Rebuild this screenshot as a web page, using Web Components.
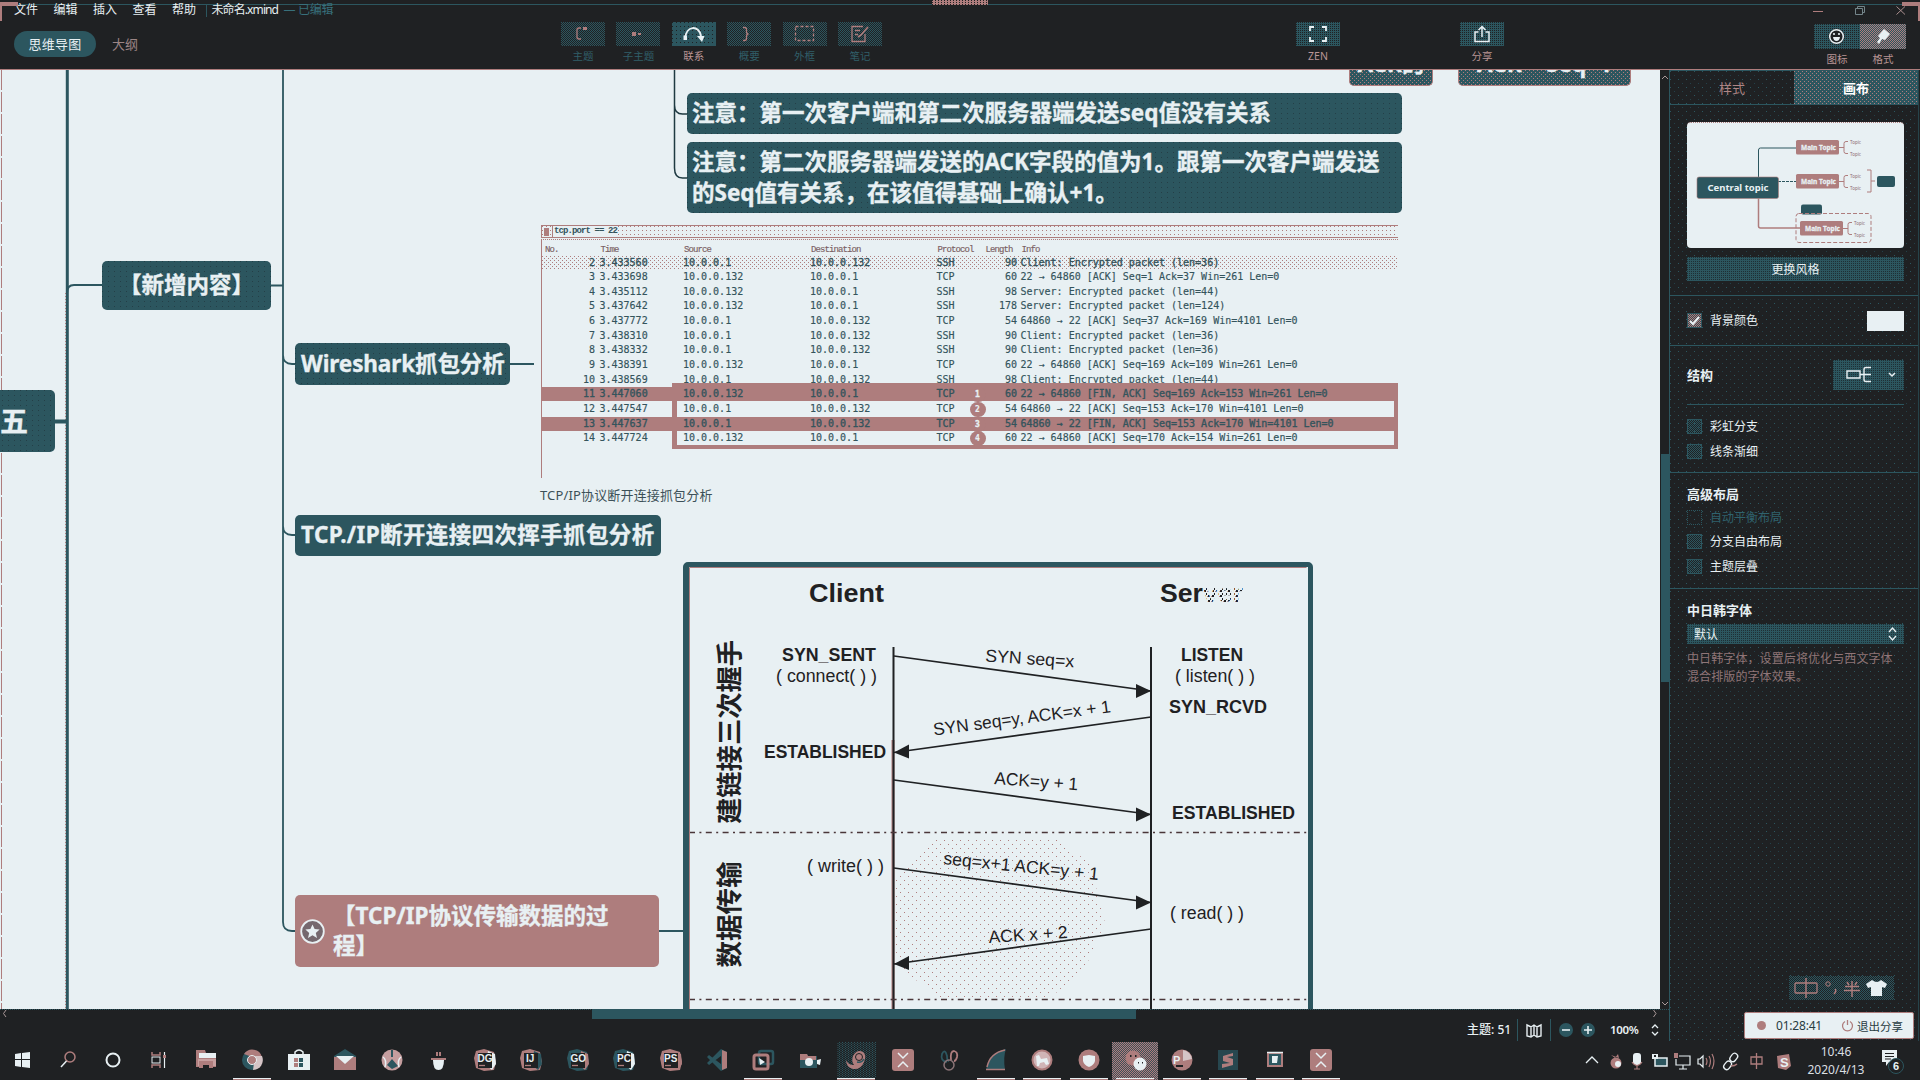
<!DOCTYPE html>
<html lang="zh-CN">
<head>
<meta charset="utf-8">
<title>未命名.xmind</title>
<style>
html,body{margin:0;height:100%;overflow:hidden;background:#1f2123}
body{--k:#1f2123;--t:#2c565f;--r:#ae7d7d;--w:#e8f0f3;font-family:"Noto Sans","Noto Sans CJK SC",sans-serif;color:var(--w)}
</style>
</head>
<body>
<mind-app></mind-app>
<script>
// Pixel screen: one dot of a colour in every w×h tile.
const dot=(c,w,h=w)=>`conic-gradient(at 1px 1px,transparent 75%,${c} 0) 0 0/${w}px ${h}px`;
const mesh=(c,w,h=w)=>`conic-gradient(at 1px 1px,transparent 75%,${c} 0) 0 0/${w}px ${h}px,conic-gradient(at 1px 1px,transparent 75%,${c} 0) ${w/2}px ${h/2}px/${w}px ${h}px`;
const define=(name,css,html)=>customElements.define(name,class extends HTMLElement{
  connectedCallback(){
    if(this.shadowRoot)return;
    const root=this.attachShadow({mode:'open'});
    root.innerHTML=`<style>*{box-sizing:border-box}:host{display:block;box-sizing:border-box}${css}</style>`+(typeof html==='function'?html(this):html);
  }
});
const svg=(w,h,body,vb)=>`<svg width="${w}" height="${h}" viewBox="${vb||`0 0 ${w} ${h}`}" fill="none">${body}</svg>`;

/* ---------- header ---------- */
define('tool-button',`
:host{display:flex;flex-direction:column;align-items:center;width:44px;flex:none}
.b{width:44px;height:24px;display:flex;align-items:center;justify-content:center;background:${dot('var(--k)',2)},var(--t)}
:host([dim]) .b{background:${mesh('var(--t)',2)},var(--k)}
:host([on]) .b{background:${dot('var(--k)',4)},#2c565f}
:host([side]){width:46px}:host([side]) .b{width:46px;height:25px}
:host([lit]) .b{background:${mesh('var(--r)',2)},var(--t)}
span{font-size:10.5px;line-height:16px;margin-top:2px;color:#b99595;white-space:nowrap}
:host([dim]) span{color:#315f69}
svg{display:block}`,
el=>`<div class="b">${el.innerHTML}</div><span>${el.getAttribute('label')}</span>`);

define('app-header',`
:host{height:70px;flex:none;background:linear-gradient(var(--t),var(--t)) 18px 4px/1884px 1px no-repeat,var(--k);border-bottom:1px solid var(--r);position:relative}
.menu{height:22px;padding:0 14px 2px;display:flex;align-items:center;font-size:12px;line-height:16px;white-space:nowrap}
.menu b{font-weight:400;width:39.5px}.menu i{width:1px;height:13px;background:var(--t);margin:0 5px 0 -6px}
.menu .ttl{letter-spacing:-.9px;width:67px}
.menu em{font-style:normal;color:#38707b;margin-left:5px;letter-spacing:-.3px}
.win{margin-left:auto;width:93px;display:flex;justify-content:space-between;align-items:center}
.row{display:flex;align-items:flex-start}
.pill{margin:9px 0 0 14px;width:82px;height:26px;border-radius:13px;background:var(--t);font-size:13px;line-height:26px;text-align:center;letter-spacing:.2px}
.out{margin:9px 0 0 16px;width:26px;font-size:13px;line-height:26px;color:#9c8585;white-space:nowrap}
.tools{margin-left:423px;display:flex;gap:11.4px}
.zen{margin-left:414px}.share{margin-left:120px}.side{margin:2px 0 0 310px;display:flex}
.tab{position:absolute;left:932px;top:0;width:56px;height:5px;background:${dot('var(--k)',3,2)},var(--r)}
.cn{position:absolute;top:2px;width:18px;height:19px;border-top:4px solid var(--r)}
.l{left:0;border-left:2px solid var(--r)}.rr{right:0;border-right:2px solid var(--r)}`,
`<div class="menu"><b>文件</b><b>编辑</b><b>插入</b><b>查看</b><b>帮助</b><i></i><span class="ttl">未命名.xmind</span><em>— 已编辑</em>
<div class="win">${svg(10,9,'<path d="M0 5.5h10" stroke="#ae7d7d"/>')}${svg(12,11,'<path d="M1.5 3.5h7v6h-7zM3.5 3V1.500h7v6H9" stroke="#74858a"/>')}${svg(10,9,'<path d="M.5.5l8.500 8.000M9 .5L.5 8.500" stroke="#a98e8e"/>')}</div></div>
<div class="row"><div class="pill">思维导图</div><div class="out">大纲</div>
<div class="tools">
<tool-button dim label="主题">${svg(20,18,'<path d="M8 3H6Q4 3 4 5v7q0 2 2 2h2" stroke="#ae7d7d" stroke-width="1.3"/><path d="M10 2h4v3h-4z" fill="#ae7d7d"/>')}</tool-button>
<tool-button dim label="子主题">${svg(20,18,'<rect x="4" y="7" width="4" height="4" fill="#ae7d7d"/><path d="M10 9h3" stroke="#ae7d7d" stroke-width="2"/>')}</tool-button>
<tool-button on label="联系">${svg(22,20,'<path d="M2 15C3 1 16 1 18 12" stroke="#e8f0f3" stroke-width="2"/><path d="M14 12h7.500L19 18zM.5 11.500h3.500V16H.5z" fill="#e8f0f3"/>')}</tool-button>
<tool-button dim label="概要">${svg(20,18,'<path d="M4 2.500h1.500q2 0 2 2v2q0 2.500 2 2.500-2 0-2 2.500v2q0 2-2 2H4" stroke="#ae7d7d" stroke-width="1.3"/>')}</tool-button>
<tool-button dim label="外框">${svg(22,18,'<rect x="1.500" y="1.500" width="18" height="14" stroke="#ae7d7d" stroke-width="1.3" stroke-dasharray="3 2"/>')}</tool-button>
<tool-button dim label="笔记">${svg(20,18,'<path d="M13 1.500H2v15h13V9M5 5.500h5M5 9.500h3" stroke="#ae7d7d" stroke-width="1.3"/><path d="M18 2l-7 8-3 2" stroke="#ae7d7d" stroke-width="1.6"/>')}</tool-button>
</div>
<tool-button class="zen" label="ZEN">${svg(18,18,'<path d="M1 6V2h4M13 2h4v4M17 12v4h-4M5 16H1v-4" stroke="#e8f0f3" stroke-width="1.800"/>')}</tool-button>
<tool-button class="share" label="分享">${svg(18,18,'<path d="M5.500 7H2v9.500h14V7h-3.500M9 12V2M5.500 5L9 1.500 12.500 5" stroke="#e8f0f3" stroke-width="1.500"/>')}</tool-button>
<div class="side"><tool-button side label="图标">${svg(17,17,'<circle cx="8.500" cy="8.500" r="7.800" fill="#1f2123"/><circle cx="8.500" cy="8.500" r="6.800" stroke="#e8f0f3" stroke-width="1.500"/><path d="M5 9h7q-.5 4-3.500 4T5 9z" fill="#e8f0f3"/><circle cx="6" cy="6" r="1.100" fill="#e8f0f3"/><circle cx="11" cy="6" r="1.100" fill="#e8f0f3"/>')}</tool-button>
<tool-button side lit label="格式">${svg(18,17,'<path d="M10 1l6 5-5 6-3-1-3 5-2-2 3-4-2-2z" fill="#e8f0f3"/>')}</tool-button></div></div>
<div class="tab"></div><div class="cn l"></div><div class="cn rr"></div>`);

/* ---------- canvas ---------- */
define('topic-node',`
:host{position:absolute;border-radius:5px;background:${dot('#243f47',6,5)},var(--t);font-weight:700;font-size:22.500px;line-height:30.500px;white-space:nowrap;display:flex;align-items:center;padding-left:6px;-webkit-text-stroke:.35px var(--w)}
:host([center]){justify-content:center;padding:0}
:host([rose]){background:var(--r);padding-left:38px}
:host([flat]){background:var(--t);letter-spacing:.38px}
:host([cut]){background:${mesh('var(--r)',4)},var(--t);border:1px solid var(--r);border-top:0;justify-content:center;padding:0;overflow:hidden;align-items:flex-end;line-height:24px}
`,`<div><slot></slot></div>`);

const packets=[
[2,'3.433560','10.0.0.1','10.0.0.132','SSH','',90,'Client: Encrypted packet (len=36)'],
[3,'3.433698','10.0.0.132','10.0.0.1','TCP','',60,'22 → 64860 [ACK] Seq=1 Ack=37 Win=261 Len=0'],
[4,'3.435112','10.0.0.132','10.0.0.1','SSH','',98,'Server: Encrypted packet (len=44)'],
[5,'3.437642','10.0.0.132','10.0.0.1','SSH','',178,'Server: Encrypted packet (len=124)'],
[6,'3.437772','10.0.0.1','10.0.0.132','TCP','',54,'64860 → 22 [ACK] Seq=37 Ack=169 Win=4101 Len=0'],
[7,'3.438310','10.0.0.1','10.0.0.132','SSH','',90,'Client: Encrypted packet (len=36)'],
[8,'3.438332','10.0.0.1','10.0.0.132','SSH','',90,'Client: Encrypted packet (len=36)'],
[9,'3.438391','10.0.0.132','10.0.0.1','TCP','',60,'22 → 64860 [ACK] Seq=169 Ack=109 Win=261 Len=0'],
[10,'3.438569','10.0.0.1','10.0.0.132','SSH','',98,'Client: Encrypted packet (len=44)'],
[11,'3.447060','10.0.0.132','10.0.0.1','TCP',1,60,'22 → 64860 [FIN, ACK] Seq=169 Ack=153 Win=261 Len=0'],
[12,'3.447547','10.0.0.1','10.0.0.132','TCP',2,54,'64860 → 22 [ACK] Seq=153 Ack=170 Win=4101 Len=0'],
[13,'3.447637','10.0.0.1','10.0.0.132','TCP',3,54,'64860 → 22 [FIN, ACK] Seq=153 Ack=170 Win=4101 Len=0'],
[14,'3.447724','10.0.0.132','10.0.0.1','TCP',4,60,'22 → 64860 [ACK] Seq=170 Ack=154 Win=261 Len=0']];
define('packet-table',`
:host{position:absolute;left:541px;top:155px;width:857px;height:253px;color:#34545c;font:10px/14.66px "DejaVu Sans Mono",monospace}
.f{height:13px;border:1px solid var(--r);border-right:0;display:flex;align-items:center;font:700 9px/11px "Liberation Mono",monospace;letter-spacing:-.9px;background:${dot('var(--r)',4,4)}}
.f i{width:5px;height:8px;background:var(--r);margin:0 3px 0 2px}.f span{border-left:1px solid var(--r);padding:0 1px;background:var(--w)}
.body{border-left:1px solid var(--r);border-top:1px dotted var(--r);height:239px;margin-top:1px;-webkit-text-stroke:.15px}
.g{display:grid;grid-template-columns:53px 4.500px 83.500px 127px 126.500px 32px 48.500px 3.500px 1fr;height:14.66px;white-space:pre}
.h{font:9px/20px "Liberation Mono",monospace;letter-spacing:-.9px;height:15.500px;color:#7a5f63}.h span{padding-left:1px}
.g span{overflow:visible}.n{text-align:right}
.s{background:${mesh('var(--r)',4)};background-size:4px 4px;-webkit-text-stroke:.35px}.x{background:linear-gradient(var(--r),var(--r)) 0 0/100% 14px no-repeat;-webkit-text-stroke:.35px}
.d{width:16px;height:15px;border-radius:8px;background:var(--r);color:var(--w);text-align:center;font-weight:700;font-size:8px;line-height:15px;margin-left:1px;position:relative;z-index:2}
.box{position:absolute;left:131px;top:158px;width:726px;height:66px;border:4px solid var(--r);border-left-width:5px}`,
`<div class="f"><i></i><span>tcp.port == 22</span></div><div class="body">
<div class="g h"><span style="padding-left:3px">No.</span><span></span><span>Time</span><span>Source</span><span>Destination</span><span>Protocol</span><span style="margin-left:16px">Length</span><span></span><span>Info</span></div>
${packets.map(p=>`<div class="g${p[0]==2?' s':p[0]==11||p[0]==13?' x':''}"><span class="n">${p[0]}</span><span></span><span>${p[1]}</span><span>${p[2]}</span><span>${p[3]}</span><span>${p[4]}</span><span style="display:flex;justify-content:space-between">${p[5]?`<span class="d">${p[5]}</span>`:'<span></span>'}<span>${p[6]}</span></span><span></span><span>${p[7]}</span></div>`).join('')}
</div><div class="box"></div>`);

const K='#1f2123';
const arrow=(x1,y1,x2,y2)=>{const s=x2>x1?-1:1;return `<path d="M${x1} ${y1}L${x2} ${y2}" stroke="${K}" stroke-width="1.600"/><path d="M${x2} ${y2}l${15*s} ${-6-s*.5-1.500}v14z" fill="${K}"/>`};
const tx=(x,y,w,s,b=0,rot=0,fs=17.500)=>`<text transform="translate(${x} ${y}) rotate(${rot})" font-size="${fs}" textLength="${w}" lengthAdjust="spacingAndGlyphs" ${b?'font-weight="700"':''}>${s}</text>`;
define('tcp-diagram',`
:host{position:absolute;left:683px;top:492px;width:630px;height:460px;border:5px solid var(--t);border-left-width:6px;border-radius:5px;overflow:hidden}
svg{display:block;font-family:"Liberation Sans","Noto Sans CJK SC",sans-serif}text{white-space:pre}`,
svg(619,450,`<defs><pattern id="p" width="8" height="8" patternUnits="userSpaceOnUse"><path d="M0 0h1v1H0zM4 4h1v1H4z" fill="#ae7d7d" shape-rendering="crispEdges"/></pattern>
<pattern id="v" width="4" height="5" patternUnits="userSpaceOnUse"><path d="M0 0h2v2H0zM2 3h1v2H2z" fill="#1f2123"/><path d="M3 1h1v1H3z" fill="#ae7d7d"/></pattern></defs>
<path d="M935 838h120l35 25 15 60-20 45-35 30h-110l-40-30-10-40 5-50z" fill="url(#p)"/>
<g fill="${K}">
${tx(809,601.500,75,'Client',1,0,26.500)}${tx(1160,601.500,43,'Ser',1,0,26.500)}<text x="1203" y="601.500" font-size="26.500" font-weight="700" fill="url(#v)">ver</text>
${tx(782,660.500,94,'SYN_SENT',1)}${tx(776,682,101,'( connect( ) )')}${tx(764,757.500,122,'ESTABLISHED',1)}
${tx(1181,660.500,62,'LISTEN',1)}${tx(1175,682,80,'( listen( ) )')}${tx(1169,713,98,'SYN_RCVD',1)}${tx(1172,819,123,'ESTABLISHED',1)}
${tx(807,872,77,'( write( ) )')}${tx(1170,919,74,'( read( ) )')}
${tx(985,661.500,89,'SYN seq=x',0,3.800)}${tx(934,735.500,179,'SYN seq=y, ACK=x + 1',0,-7.500)}${tx(994,784,84,'ACK=y + 1',0,4.300)}${tx(943,864,156,'seq=x+1 ACK=y + 1',0,5.900)}${tx(989,943,79,'ACK x + 2',0,-3.800)}
<text transform="translate(739 824) rotate(-90)" font-size="26.300" font-weight="700">建链接三次握手</text>
<text transform="translate(739 967.500) rotate(-90)" font-size="26.500" font-weight="700">数据传输</text></g>
<path d="M893 740v272" stroke="#ae7d7d" stroke-width="3"/><path d="M893.500 647v365M1151 647v365" stroke="${K}" stroke-width="2"/>
${arrow(894,656,1151,691)}${arrow(1151,717,894,752.500)}${arrow(894,780,1151,814.500)}${arrow(894,868,1151,902.500)}${arrow(1151,929,894,964)}
<path d="M689 832.500h620M689 999.500h620" stroke="#4a3639" stroke-width="1.700" stroke-dasharray="6 4.400 2 4.400"/>
<path d="M689.500 1009V567.500h617" stroke="#ae7d7d"/>`,'689 567 619 450'));

define('mind-canvas',`
:host{position:relative;width:1660px;height:939px;background:var(--w);overflow:hidden;flex:none}
.lines{position:absolute;left:0;top:0}
.cap{position:absolute;left:540px;top:415px;font-size:13px;line-height:20px;color:#3c5058;white-space:nowrap;letter-spacing:.15px}
.star{position:absolute;left:300px;top:849px}`,
`<svg class="lines" width="1660" height="939" viewBox="0 70 1660 939" fill="none" stroke="#2c565f">
<path d="M1.500 70v320M1.500 453v556" stroke="#ae7d7d" stroke-width="1" stroke-dasharray="20 2"/>
<path d="M67.300 70V1009" stroke-width="3"/><path d="M65.500 293V1009" stroke="#ae7d7d" stroke-dasharray="1 2"/><path d="M55 421.500h12" stroke-width="4"/><path d="M67 293q0-8 7-8h28M271 285.500h12" stroke-width="2"/>
<path d="M283 70V922q0 9 9 9h3M283 355q0 9 9 9h3M283 526q0 9 9 9h3M510 364h24M659 931h26" stroke-width="1.800"/>
<path d="M674.500 70V168q0 10 8 10h5M674.500 105q0 9 8 9h5" stroke="#1f3a42" stroke-width="1.500"/></svg>
<topic-node cut style="left:1349px;top:-26px;width:84px;height:42px"><div style="padding-bottom:9px">ACK的</div></topic-node>
<topic-node cut style="left:1458px;top:-26px;width:173px;height:42px"><div style="padding-bottom:9px">ACK = Seq+1</div></topic-node>
<topic-node style="left:687px;top:23px;width:715px;height:41px;padding-left:5px">注意：第一次客户端和第二次服务器端发送seq值没有关系</topic-node>
<topic-node style="left:687px;top:72px;width:715px;height:71px;padding-left:5px">注意：第二次服务器端发送的ACK字段的值为1。跟第一次客户端发送<br>的Seq值有关系，在该值得基础上确认+1。</topic-node>
<topic-node center style="left:102px;top:191px;width:169px;height:49px">【新增内容】</topic-node>
<topic-node style="left:295px;top:273px;width:215px;height:42px;letter-spacing:-.1px">Wireshark抓包分析</topic-node>
<topic-node style="left:-40px;top:320px;width:95px;height:62px;padding-left:40px;font-size:28px">五</topic-node>
<topic-node flat style="left:295px;top:445px;width:366px;height:41px">TCP./IP断开连接四次挥手抓包分析</topic-node>
<topic-node rose style="left:295px;top:825px;width:364px;height:72px">【TCP/IP协议传输数据的过<br>程】</topic-node>
<svg class="star" width="25" height="25" viewBox="0 0 25 25"><circle cx="12.500" cy="12.500" r="11.300" fill="#75686e" stroke="#e8f0f3" stroke-width="1.800"/><path d="M12.500 5.500l2.100 4.600 5 .5-3.800 3.300 1.200 5-4.500-2.600L8 18.900l1.200-5-3.800-3.300 5-.5z" fill="#e8f0f3"/></svg>
<packet-table></packet-table><div class="cap">TCP/IP协议断开连接抓包分析</div><tcp-diagram></tcp-diagram>`);

define('scroll-y',`:host{width:9px;flex:none;background:var(--k);display:flex;flex-direction:column;align-items:center;padding-top:4px;border-left:1px solid var(--k)}
i{width:8px;height:228px;background:var(--t);margin-top:374px}svg:last-child{margin-top:auto;margin-bottom:2px}`,
svg(8,6,'<path d="M1 5l3-3 3 3" stroke="#a99"/>')+'<i></i>'+svg(8,6,'<path d="M1 1l3 3 3-3" stroke="#a99"/>'));
define('scroll-x',`:host{height:10px;background:linear-gradient(var(--t),var(--t)) 592px 0/544px 10px no-repeat,${dot('var(--t)',2,10)};display:flex;justify-content:space-between;padding:0 11px 0 2px;flex:none}`,
svg(6,9,'<path d="M4 1L1.500 4.500 4 8" stroke="#a99"/>')+svg(6,9,'<path d="M1.500 1L4 4.500 1.500 8" stroke="#a99"/>'));
define('status-bar',`:host{flex:1;display:flex;align-items:center;font-size:12px;line-height:20px;padding-left:1467px;white-space:nowrap;font-weight:500}
i{width:1px;height:22px;background:var(--t)}svg{display:block;flex:none}`,
`<span style="width:50px">主题: 51</span><i></i><span style="margin:0 8px">${svg(16,15,'<path d="M1 2l4 2 3-2 3 2 4-2v11l-4 1-3-2-3 2-4-1zM5 4v9M8 2v10M11 4v9" stroke="#e8f0f3" stroke-width="1.400"/>')}</span><i></i>
<span style="margin:0 8px">${svg(14,14,'<circle cx="7" cy="7" r="7" fill="#2c565f"/><path d="M3 7h8" stroke="#e8f0f3" stroke-width="1.600"/>')}</span>${svg(14,14,'<circle cx="7" cy="7" r="7" fill="#2c565f"/><path d="M3 7h8M7 3v8" stroke="#e8f0f3" stroke-width="1.600"/>')}
<span style="margin-left:15px;width:41px;font-size:11.500px;font-weight:600;letter-spacing:-.3px">100%</span>${svg(8,12,'<path d="M1 4l3-3 3 3M1 8l3 3 3-3" stroke="#e8f0f3" stroke-width="1.300"/>')}`);

/* ---------- side panel ---------- */
define('check-row',`:host{display:flex;align-items:center;height:15px;font-size:12px;line-height:16px;white-space:nowrap}
i{width:15px;height:15px;border:1px solid var(--t);margin-right:8px;background:${mesh('var(--t)',2)};display:flex;align-items:center;justify-content:center}
:host([on]) i{background:${mesh('var(--r)',2)},#3a4d54}:host([dim]){color:#2f626d}:host([dim]) i{background:none;border-style:dotted}svg{display:none}:host([on]) svg{display:block}`,
`<i>${svg(11,10,'<path d="M1 5l3 3 6-7" stroke="#e8f0f3" stroke-width="2"/>')}</i><slot></slot>`);

const mt=(x,y)=>`<rect x="${x}" y="${y}" width="43" height="14.500" rx="1.500" fill="#ae7d7d"/><text x="${x+5}" y="${y+10}" font-size="7.500" font-weight="700" fill="#e8f0f3" stroke="#e8f0f3" stroke-width=".3" textLength="35" lengthAdjust="spacingAndGlyphs">Main Topic</text><path d="M${x+43} ${y+7.500}h5M${x+52} ${y+1.500}h-2q-2 0-2 2v8q0 2 2 2h2" stroke="#ae7d7d"/><text x="${x+54}" y="${y+4}" font-size="4.500" fill="#8d6d70">Topic</text><text x="${x+54}" y="${y+16}" font-size="4.500" fill="#8d6d70">Topic</text>`;
define('style-preview',`:host{height:126px;background:var(--w);border-radius:4px;border-top:1px dotted var(--r)}svg{display:block;font-family:"Noto Sans",sans-serif}`,
svg(218,125,`<g transform="translate(0 -1.500)"><path d="M109 26.500H73.500q-2 0-2 2V56" stroke="#2c565f"/><path d="M71.500 77v27.500q0 2 2 2H113" stroke="#ae7d7d" stroke-width="1.500"/><path d="M91 60h18" stroke="#2c565f" stroke-dasharray="3 1"/>
<rect x="10" y="55.500" width="81.500" height="21.500" rx="2" fill="#2c565f" stroke="#ae7d7d" stroke-width=".6"/><text x="20.500" y="69.500" font-size="9.500" font-weight="700" fill="#e8f0f3" textLength="61">Central topic</text>
${mt(109,18.500)}${mt(109,52.500)}<path d="M180 48.500h4v22h-4M184 59.500h4" stroke="#ae7d7d"/><rect x="190" y="54.500" width="18" height="11" rx="2" fill="#2c565f"/>
<rect x="114" y="83" width="21" height="10" rx="2" fill="#2c565f"/><rect x="109" y="92" width="75" height="29" rx="3" stroke="#ae7d7d" stroke-dasharray="4 2"/>${mt(113,99.500)}</g>`));

define('side-panel',`
:host{width:250px;height:971px;position:relative;flex:none;background:${dot('var(--t)',8,8)},${dot('#244049',8,8)},var(--k);background-position:0 0,4px 4px,0 0;border-left:1px solid var(--t);border-right:1px solid #26434a;border-top:1px solid var(--t);display:flex;flex-direction:column}
.tabs{display:flex;height:34px;flex:none;border-bottom:1px solid var(--t)}.tabs div{flex:1;display:flex;align-items:center;justify-content:center;font-size:13px;color:#ae8585;padding-bottom:1px}
.tabs div:last-child{background:${mesh('var(--r)',4,4)},var(--t);color:#fff;font-weight:700}
section{flex:none;border-bottom:1px solid var(--t);padding:0 14px 0 17px;display:flex;flex-direction:column}
.btn{height:24px;margin-top:9px;background:${dot('#1f2f35',2)},var(--t);text-align:center;font-size:12px;line-height:25px}
.sp{flex-direction:row;justify-content:space-between;align-items:center}
.sw{width:37px;height:20px;background:var(--w)}.st{display:flex;justify-content:space-between;align-items:center}
.dd{width:71px;height:30px;background:${dot('#1f2f35',2)},var(--t);display:flex;align-items:center;justify-content:space-between;padding:0 8px 0 13px}
b{font-size:13px;line-height:20px}hr{border:0;border-top:1px solid var(--t);width:100%;margin:14px 0}
.sel{height:20px;margin-top:4px;background:${dot('#1f2f35',2)},var(--t);display:flex;align-items:center;justify-content:space-between;font-size:12px;padding:0 7px}
p{margin:6px 0 0;font-size:12px;line-height:18px;color:#8f7577;letter-spacing:.1px}
.ime{position:absolute;left:119px;top:905px;width:105px;height:24px;background:${mesh('var(--t)',2)};display:flex;align-items:center;padding-left:5px}
.bar{position:absolute;left:74px;top:941px;width:170px;height:27px;background:var(--w);border:1px solid var(--r);border-radius:2px;display:flex;align-items:center;color:#273b41;font-size:12px;padding-left:12px;white-space:nowrap}
.bar i{width:9px;height:9px;border-radius:5px;background:var(--r);margin:0 9px 0 0}`,
`<div class="tabs"><div>样式</div><div>画布</div></div>
<section style="height:191px;padding-top:17px"><style-preview></style-preview><div class="btn">更换风格</div></section>
<section class="sp" style="height:50px"><check-row on>背景颜色</check-row><div class="sw"></div></section>
<section style="height:127px;padding-top:14px"><div class="st"><b>结构</b><div class="dd">${svg(26,18,'<path d="M1 5h13v7H1zM14 8.500h11M25 1.500h-5q-2 0-2 2v10q0 2 2 2h5" stroke="#e8f0f3" stroke-width="1.400"/>')}${svg(8,6,'<path d="M1 1l3 3 3-3" stroke="#e8f0f3" stroke-width="1.500"/>')}</div></div><hr><check-row>彩虹分支</check-row><check-row style="margin-top:10px">线条渐细</check-row></section>
<section style="height:116px;padding-top:11px"><b>高级布局</b><check-row dim style="margin-top:6px">自动平衡布局</check-row><check-row style="margin-top:9px">分支自由布局</check-row><check-row style="margin-top:10px">主题层叠</check-row></section>
<section style="border:0;padding-top:11px"><b>中日韩字体</b><div class="sel"><span>默认</span>${svg(9,14,'<path d="M1 5l3.500-4L8 5M1 9l3.500 4L8 9" stroke="#e8f0f3" stroke-width="1.300"/>')}</div><p>中日韩字体，设置后将优化与西文字体<br>混合排版的字体效果。</p></section>
<div class="ime">${svg(95,22,'<rect x="1" y="6" width="22" height="10" rx="1" stroke="#ae7d7d" stroke-width="1.300"/><path d="M12 1v20" stroke="#ae7d7d" stroke-width="1.500"/><circle cx="34" cy="7" r="2.200" stroke="#ae7d7d"/><path d="M41 12q2 2-1 5" stroke="#ae7d7d" stroke-width="1.500"/><path d="M51 9.500h14M50 13.500h16M58 4v16M53 5l2 3M63 5l-2 3" stroke="#ae7d7d" stroke-width="1.500"/><path d="M79 3l-6 4 2 4 3-1v9h11v-9l3 1 2-4-6-4q-4 4-9 0z" fill="#e8f0f3" transform="translate(-1 0)"/>')}</div>
<div class="bar"><i></i><span style="width:65px;letter-spacing:-.2px;margin-left:1px">01:28:41</span>${svg(13,13,'<path d="M4 2.500a5 5 0 1 0 5 0M6.500 1v5" stroke="#ae7d7d" stroke-width="1.300"/>')}<span style="font-size:11.500px;margin-left:3px">退出分享</span></div>`);

/* ---------- taskbar ---------- */
const R='#ae7d7d',T='#2c565f',W='#e8f0f3';
const f=(d,c,x='')=>`<path d="${d}" fill="${c}" ${x}/>`, s=(d,c,w=1.500)=>`<path d="${d}" stroke="${c}" stroke-width="${w}"/>`;
const jb=(n,a,b)=>f('M2 2l8-2 10 3 2 10-2 8-10 1L2 19 0 9z',a)+f('M14 2l7 3 1 10-4 6-6-5z',b)+`<rect x="4" y="4" width="14" height="15" fill="${K}"/><text x="${n=='IJ'?6:n=='PS'||n=='PC'?4:3.500}" y="13" font-size="10" font-weight="700" fill="${W}" font-family="Liberation Sans">${n}</text>`+s('M5 16.500h6',R,1.300);
const xm=`<rect x="0" y="0" width="22" height="22" rx="3" fill="${R}"/>`+s('M6 4l5 5 5-5M6 18l5-5 5 5',W,1.500);
const apps=[
f('M4 5l6-1v6H4zM11 4l8-1v7h-8zM4 11h6v7l-6-1zM11 11h8v8l-8-1z',W),
`<circle cx="13" cy="8" r="5" stroke="${R}" stroke-width="1.500"/>`+s('M9.500 12L4 18',W,1.500),
`<circle cx="11" cy="11" r="6.500" stroke="${W}" stroke-width="2"/>`,
s('M4 3v3h8V3M4 19v-3h8v3',R)+`<rect x="4" y="8" width="8" height="6" stroke="${W}"/>`+s('M16.500 3v16',W,1.200)+f('M15 6h3v3h-3z',R),
f('M1 1h9l1 3h10v14H1z',R)+f('M4 4h17v5H4z',W)+f('M3 10h18v7H3z','#c79f9f')+f('M4 12h14v7H4z',R)+f('M8 16h6v3H8z',K),
`<circle cx="11" cy="11" r="10" fill="${T}"/>`+f('M3 5a10 10 0 0 1 18 3H11z',R)+f('M14 7h7a10 10 0 0 1-9 14z','#d5c4c6')+`<circle cx="11" cy="11" r="4.500" fill="${R}" stroke="${W}"/>`,
f('M0 5h22v16H0z',W)+s('M7 5V3q4-4 8 0v2',W)+f('M6 9h4v4H6zM6 14h4v4H6z',R)+f('M11 9h4v4h-4zM11 14h4v4h-4z',T),
f('M0 7l11-7 11 7v8H0z',T)+f('M0 8h22v13H0z',R)+f('M2 7h18l-9 8z',W),
`<circle cx="11" cy="11" r="10.500" fill="#c49d9e"/>`+f('M11 10l6 7-6 3-5-4zM10 1h2v7h-2z',T)+s('M2 8q4 3 2 10M20 8q-4 3-2 10',W),
f('M6 11h11q0 10-5.500 10T6 11z',W)+s('M4 10h15M10 3v4M13 3v4',R,2),
jb('DG',R,W),jb('IJ',R,T),jb('GO',T,R),jb('PC',T,W),jb('PS',R,R),
f('M15 0l6 3v16l-6 3L1 8l2-2 12 9V7L3 16l-2-2z',T)+f('M16 1l5 2v16l-5 2z',R),
`<rect x="7" y="2" width="14" height="13" rx="2" stroke="${T}" stroke-width="2.500"/><rect x="2" y="6" width="14" height="14" rx="2" stroke="${R}" stroke-width="3"/>`+f('M7 9l6 4-5 3z',W),
f('M1 5h7l1 2h9v12H1z',T)+f('M1 5h7l1 2h8v4H1z',R)+`<circle cx="10" cy="13" r="4" fill="${W}"/>`+f('M18 11l4-1-1 6-3-1z',W),
f('M1 11q2 5 8 5-3-4-1-9 4-7 10-4 4 3 1 10-3 8-11 7-7-2-7-9z',R)+`<circle cx="14" cy="8" r="3.500" stroke="${K}"/>`+s('M12 13q5 1 7-3',T),
xm,
s('M9 13Q2 12 4 5q3-6 5 2 0 5 2 5',T,1.800)+s('M13 11q-1-9 3-9 4 1 3 6-1 4-3 4',R,1.800)+`<circle cx="11" cy="16" r="5" stroke="#8b7477" stroke-width="1.500"/>`,
f('M1 21Q4 4 21 0q-3 8-1 21z',T)+s('M2 18Q5 4 20 1M1 20.500h19',R,1.500),
`<circle cx="11" cy="11" r="9.500" fill="#d0b4b6" stroke="${R}" stroke-width="2"/>`+f('M5 7l3-1 2 4 6-1 2 6-3 1-2-3-4 1-1 3H6z',W),
`<circle cx="11" cy="11" r="10.500" fill="${R}"/>`+f('M5 7l6-1 6 1v5q-1 4-6 6-5-2-6-6z',W),
`<circle cx="9" cy="9" r="7.500" fill="${R}"/><circle cx="16" cy="15" r="6.500" fill="${W}"/>`+f('M6 6h1.500v2H6zM11 6h1.500v2H11zM14 13h1v1.500h-1zM18 13h1v1.500h-1z',K),
`<circle cx="11" cy="11" r="10.500" fill="${R}"/>`+f('M12 1a10 10 0 0 1 9 9l-9 2z','#d5c4c6')+`<text x="2" y="15" font-size="11" font-weight="700" fill="${W}" font-family="Liberation Sans">P</text>`+s('M5 17h7',K,2),
`<rect x="1" y="1" width="20" height="20" fill="#27474f"/>`+f('M16 4l-10 3v5l7 2-8 1v4l11-3v-6l-6-2 6-1z',R),
f('M3 3h16v15H3z',R)+s('M3 3.500h16',W)+f('M5 5h12v11H5z',T)+f('M8 7h6l-1 7H8z',W),
xm];
const open=[5,16,18,21,22,23,24,25,26,27,28];
define('task-icon',`:host{width:46.48px;height:38px;flex:none;display:flex;align-items:center;justify-content:center;background-clip:content-box;padding:0 4px 2px}
:host([open])::after{content:"";position:absolute;bottom:0;width:38px;height:2px;background:linear-gradient(var(--w) 50%,var(--r) 0)}
:host([nudge]){padding-left:7px;padding-right:3px}
:host([sel]){background:${mesh('#2c565f',3,2)};background-clip:content-box}:host([big]){padding:0;border:solid transparent;border-width:0 0 2px;background:${mesh('var(--r)',2)},#3e5058}svg{display:block;width:22px;height:22px;flex:none;overflow:visible}`,
el=>svg(22,22,apps[+el.getAttribute('icon')]));
define('task-bar',`:host{height:39px;flex:none;background:var(--k);display:flex;align-items:flex-end;justify-content:space-between;position:relative}
.apps{display:flex;height:38px;margin-left:-3.300px}.tray{display:flex;align-items:center;height:38px}
.clock{width:80px;height:39px;text-align:center;font-size:12px;line-height:18px;padding-top:2px;color:#dadfe2;margin:0 4px 0 1px}
.right{display:flex;align-items:center;padding-right:14px}`,
`<div class="apps">${apps.map((_,i)=>`<task-icon icon="${i}"${i<2?' nudge':''}${open.includes(i)?' open':''}${i==18?' sel':''}${i==24?' big':''}></task-icon>`).join('')}</div>
<div class="right"><div class="tray">${svg(215,24,
s('M6 14l6-6 6 6',W,1.300)
+`<circle cx="36" cy="14" r="5.500" fill="${R}"/>`+f('M31 6l4 3 3-4 1 4z',R)+`<circle cx="38" cy="15" r="3" fill="${W}"/>`
+`<rect x="53" y="4" width="8" height="12" rx="3" fill="${W}"/>`+s('M52 13q5 7 10 0M57 17v3M54 20h6',R,1.200)
+`<rect x="75" y="9" width="12" height="8" fill="${T}" stroke="${W}" stroke-width="1.500"/>`+f('M72 5h6v5h-6z',W)+f('M74 6h2v2h-2z',K)
+s('M99 7h11v9H96v-6M103 16v4M99 20h8',W,1.200)+f('M94 4h4v5h-4z',R)
+s('M118 10h2l3-3v11l-3-3h-2z',W,1.200)+s('M126 9q2 3 0 7M129 7q3 5 0 11M132 5q4 7 0 15',R,1.200)
+`<g transform="rotate(-52 151 12)"><rect x="141" y="9" width="9" height="6" rx="3" stroke="${W}" stroke-width="1.300"/><rect x="151" y="9" width="9" height="6" rx="3" stroke="${W}" stroke-width="1.300"/></g>`+s('M151 17q4 0 6-2',R,1.300)
+s('M171 8h11v7h-11zM176.500 4v16',R,1.300)
+f('M197 7l12-2 2 12-5 4-8-2z',R)+`<text x="200" y="18" font-size="13" font-weight="700" fill="${W}" font-family="Liberation Sans">S</text>`)}</div>
<div class="clock">10:46<br>2020/4/13</div>
${svg(26,26,f('M2 2h15v12h-8l-3 4v-4H2z',W)+s('M5 5.500h9M5 8.500h9M5 11h6',K,1.200)+`<circle cx="16" cy="18" r="7.500" fill="${K}" stroke="${T}"/><text x="13" y="22" font-size="11" font-weight="700" fill="${W}" font-family="Liberation Sans">6</text>`)}</div>`);

define('mind-app',`:host{width:1920px;height:1080px;display:flex;flex-direction:column;overflow:hidden;background:var(--k)}
main{display:flex;height:971px;flex:none}.left{width:1669px;flex:none;display:flex;flex-direction:column}.cv{display:flex}`,
`<app-header></app-header><main><div class="left"><div class="cv"><mind-canvas></mind-canvas><scroll-y></scroll-y></div><scroll-x></scroll-x><status-bar></status-bar></div><side-panel></side-panel></main><task-bar></task-bar>`);
</script>
</body>
</html>
